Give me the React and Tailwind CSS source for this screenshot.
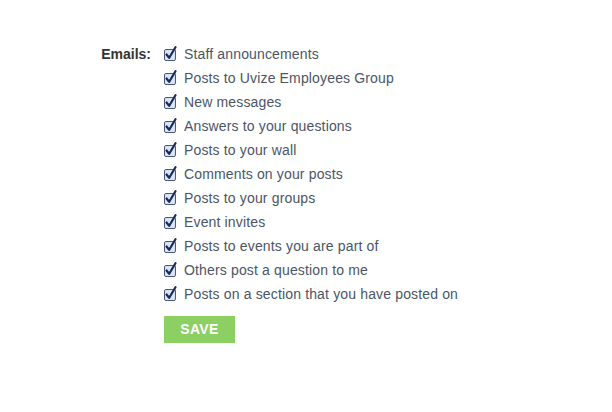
import React from 'react';

const items = [
  'Staff announcements',
  'Posts to Uvize Employees Group',
  'New messages',
  'Answers to your questions',
  'Posts to your wall',
  'Comments on your posts',
  'Posts to your groups',
  'Event invites',
  'Posts to events you are part of',
  'Others post a question to me',
  'Posts on a section that you have posted on',
];

const CheckIcon = () => (
  <svg width="14" height="15" viewBox="0 0 14 15" className="shrink-0">
    <rect x="0.5" y="3.5" width="11" height="11" rx="1.5" fill="#d6e4f5" stroke="#4a5a78" />
    <path d="M2.5 8.5 L5.2 11.8 L11.5 1.2" fill="none" stroke="#1c2b52" strokeWidth="2.2" strokeLinecap="round" strokeLinejoin="round" />
  </svg>
);

export default function App() {
  return (
    <div className="w-[612px] h-[412px] bg-white pt-[41px] font-['Liberation_Sans',Arial,sans-serif]">
      <div className="flex">
        <div className="w-[151px] pt-[1px] text-right text-[14px] leading-[24px] font-bold text-[#333]">Emails:</div>
        <div className="ml-[13px] flex flex-col">
          {items.map(item => (
            <label key={item} className="flex items-center h-[24px] text-[14px] tracking-[0.15px] text-[#4b5566]">
              <CheckIcon />
              <span className="ml-[6px] pt-[2px]">{item}</span>
            </label>
          ))}
          <button className="mt-[11px] w-[71px] h-[27px] bg-[#8ccf62] text-white font-bold text-[14px] tracking-wide">
            SAVE
          </button>
        </div>
      </div>
    </div>
  );
}
